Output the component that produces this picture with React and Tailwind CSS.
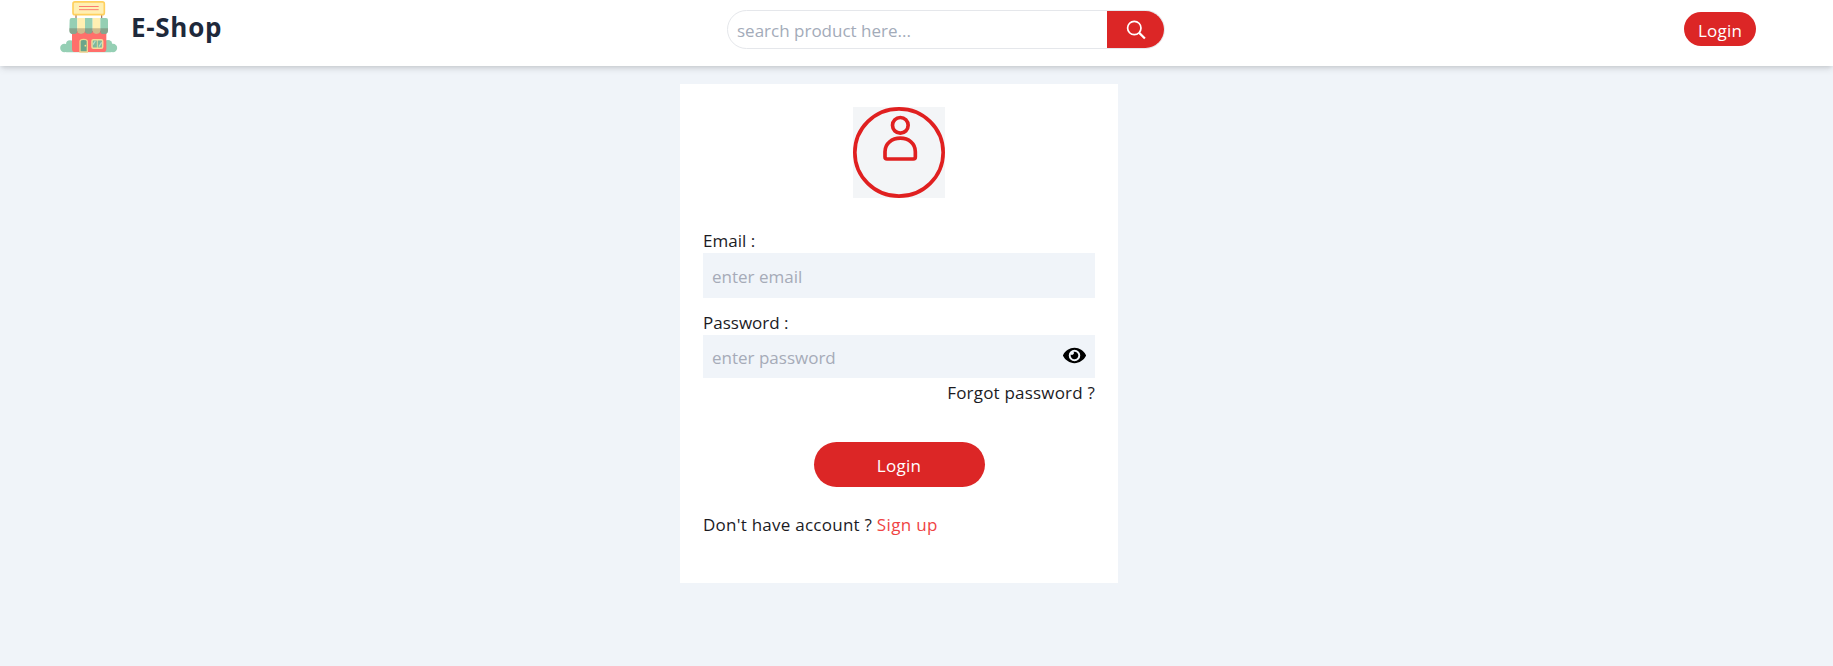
import { FaEye } from "react-icons/fa";

function StoreLogo() {
  return (
    <svg viewBox="30 0 174 159" className="w-[58px] h-[53px] shrink-0">
      <g fill="#95cfb4">
        <circle cx="43" cy="144" r="12.5" />
        <circle cx="60" cy="133" r="12" />
        <rect x="42" y="136" width="148" height="20.5" rx="8" />
        <circle cx="174" cy="133" r="13" />
        <circle cx="189" cy="144" r="12.5" />
      </g>
      <path d="M78 44v12M155 44v12" stroke="#a5704f" strokeWidth="3.5" />
      <rect x="69" y="5.500" width="94" height="38.500" rx="6" fill="#ffefb2" stroke="#ffd05e" strokeWidth="5" />
      <path d="M87 19.500h59M87 29h59" stroke="#fb7d70" strokeWidth="3" />
      <path d="M66 92h103v54q0 10-9 10H75q-9 0-9-10z" fill="#ff6f6b" />
      <path d="M59 60q0-6 6-6h17v38q0 10-12 10t-12-10z" fill="#95cfb4" />
      <path d="M82 54h23v38q0 9-12 9t-11-9z" fill="#ffefb2" />
      <path d="M105 54h23v38q0 9-12 9t-11-9z" fill="#95cfb4" />
      <path d="M128 54h23v38q0 9-11 9t-12-9z" fill="#ffefb2" />
      <path d="M151 54h17q6 0 6 6v32q0 10-12 10t-11-10z" fill="#95cfb4" />
      <path d="M58 85h116v7q0 10-12 10t-11-7q-1 6-11 6t-12-6q-1 6-12 6t-11-6q-1 6-12 6t-11-6q-1 7-12 7t-12-10z" fill="#6b4a3a" fillOpacity=".32" />
      <path d="M90 156v-32q0-6 11-6t11 6v32z" fill="#6aa58a" stroke="#f2d490" strokeWidth="4" />
      <circle cx="106" cy="137" r="2.500" fill="#ffe08a" />
      <rect x="126" y="119" width="32" height="26" rx="4" fill="#7fb79c" stroke="#f2dc9a" strokeWidth="4.500" />
      <path d="M142 120v24" stroke="#f2dc9a" strokeWidth="2.500" />
      <path d="M129 134l7-11M147 140l8-13" stroke="#b7dfcb" strokeWidth="3.500" />
    </svg>
  );
}

function SearchIcon() {
  return (
    <svg viewBox="0 0 20 20" className="w-5 h-5" fill="none" stroke="#fff" strokeWidth="1.700">
      <circle cx="8.300" cy="8" r="6.700" />
      <path d="M13.200 12.900L18.900 18.500" strokeWidth="2.200" />
    </svg>
  );
}

function Avatar() {
  return (
    <svg viewBox="0 0 276 273" className="w-[92px] h-[91px] bg-[#f3f5f7]" fill="none" stroke="#e02020" strokeWidth="11">
      <ellipse cx="138" cy="136.500" rx="132.500" ry="131" />
      <circle cx="142" cy="55" r="23.500" />
      <path d="M102 156q-6 0-6-6v-16c0-25 21-40.500 46-40.500s45 15.500 45 40.500v16q0 6-6 6z" />
    </svg>
  );
}

export default function App() {
  return (
    <div className="h-[666px] flex flex-col bg-[#f0f4f9] text-[17px] leading-[27px] text-[#1b1b1f] font-['Open_Sans','Noto_Sans',sans-serif]">
      <header className="h-[66px] shrink-0 bg-white shadow-[0_4px_7px_-1px_rgba(0,0,0,0.1),0_2px_4px_-1px_rgba(0,0,0,0.1)] flex items-start justify-between pl-[60px] pr-[77px]">
        <div className="flex w-[667px] items-start">
          <StoreLogo />
          <h1 className="ml-[13px] mt-[9px] text-[26px] leading-9 font-bold tracking-[0.7px] text-[#1e293b]">E-Shop</h1>
        </div>
        <div className="mt-[10px] flex h-[39px] w-[438px] overflow-hidden rounded-full border border-[#e5e7eb]">
          <input
            className="min-w-0 flex-1 pl-[9px] pt-px outline-none placeholder:text-[#a3abb9]"
            placeholder="search product here..."
          />
          <button className="flex w-[57px] items-center justify-center bg-[#dc2626]">
            <SearchIcon />
          </button>
        </div>
        <div className="flex w-[591px] justify-end">
          <button className="mt-3 h-[34px] w-[72px] rounded-full bg-[#dc2626] pt-[3px] text-white tracking-[0.2px]">Login</button>
        </div>
      </header>

      <main className="mt-[18px] ml-[680px] flex h-[499px] w-[438px] flex-col bg-white px-[23px] pt-[23px]">
        <div className="flex justify-center">
          <Avatar />
        </div>
        <form className="mt-[29px] flex flex-col">
          <label className="h-[26px]"><span>Email :</span></label>
          <input className="h-[45px] bg-[#f0f4f9] px-[9px] pt-px outline-none placeholder:text-[#a6abb8]" placeholder="enter email" />
          <label className="mt-[11px] h-[26px]"><span>Password :</span></label>
          <div className="flex h-[43px] items-center bg-[#f0f4f9] px-[9px]">
            <input className="min-w-0 flex-1 pt-[2px] outline-none placeholder:text-[#a6abb8]" placeholder="enter password" />
            <FaEye className="mb-[3px] h-[21px] w-[23px] text-black" />
          </div>
          <a className="mt-px self-end"><span className="tracking-[0.2px]">Forgot password ?</span></a>
          <button type="button" className="mt-[36px] h-[45px] w-[171px] self-center rounded-full bg-[#dc2626] pt-[2px] text-white tracking-[0.3px]">Login</button>
        </form>
        <p className="mt-[24px] whitespace-pre"><span className="tracking-[0.25px]">Don't have account ? </span><a className="text-[#ef4444] tracking-[0.35px]">Sign up</a></p>
      </main>
    </div>
  );
}
